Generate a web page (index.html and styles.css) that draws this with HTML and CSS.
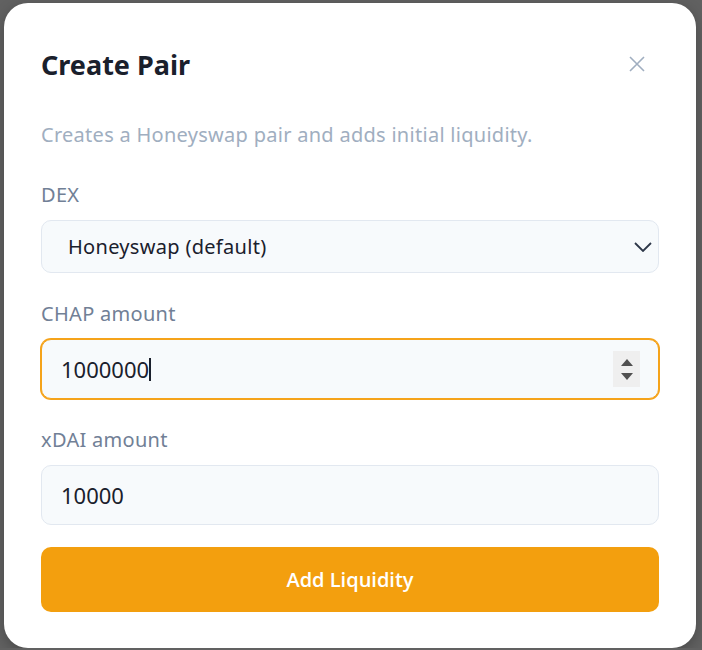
FILE: index.html
```html
<!DOCTYPE html>
<html>

<head>
    <meta charset="utf-8">
    <title>Create Pair</title>
    <link rel="stylesheet" href="styles.css">
</head>

<body>
    <div class="modal">
        <div class="modal_header">
            <h2 class="title">Create Pair</h2>
            <button class="close" aria-label="Close">
                <svg width="16" height="16" viewBox="0 0 16 16">
                    <path d="M1 1L15 15M15 1L1 15" stroke="#a0aec0" stroke-width="1.6" fill="none" />
                </svg>
            </button>
        </div>

        <p class="subtitle">Creates a Honeyswap pair and adds initial liquidity.</p>

        <label class="label">DEX</label>
        <div class="select">
            <span>Honeyswap (default)</span>
            <svg class="chevron" width="18" height="10" viewBox="0 0 18 10">
                <path d="M1 1L9 9L17 1" stroke="#2d3748" stroke-width="1.8" fill="none" />
            </svg>
        </div>

        <label class="label">CHAP amount</label>
        <div class="field focused">
            <span>1000000</span><span class="caret"></span>
            <div class="spinner">
                <span class="arrow up"></span>
                <span class="arrow down"></span>
            </div>
        </div>

        <label class="label">xDAI amount</label>
        <div class="field">
            <span>10000</span>
        </div>

        <button class="submit">Add Liquidity</button>
    </div>
</body>

</html>
```

FILE: styles.css
```css
body {
    margin: 0;
    background: #616161;
    font-family: "Noto Sans", Arial, sans-serif;
    color: #1a202c
}

.modal {
    box-sizing: border-box;
    width: 692px;
    height: 645px;
    margin: 3px 0 0 4px;
    padding: 47px 37px 0 37px;
    background: #fff;
    border-radius: 24px;
    box-shadow: 0 4px 14px rgba(0, 0, 0, 0.25);
    display: flex;
    flex-direction: column
}

.modal_header {
    display: flex;
    justify-content: space-between;
    align-items: center;
    height: 30px
}

.title {
    margin: 0;
    font-size: 27px;
    line-height: 30px;
    font-weight: 700;
    color: #1a202c
}

.close {
    border: none;
    background: none;
    padding: 0;
    width: 16px;
    height: 16px;
    margin-right: 14px;
    margin-top: -2px
}

.close svg {
    display: block
}

.subtitle {
    margin: 40px 0 0 0;
    font-size: 20px;
    line-height: 30px;
    letter-spacing: 0.28px;
    color: #a0aec0
}

.label {
    margin-top: 26px;
    margin-bottom: 10px;
    font-size: 20px;
    line-height: 30px;
    letter-spacing: 0.3px;
    color: #718096
}

.subtitle + .label {
    margin-top: 30px
}

.select {
    box-sizing: border-box;
    height: 53px;
    padding: 0 6px 0 26px;
    display: flex;
    align-items: center;
    justify-content: space-between;
    background: #f7fafc;
    border: 1px solid #e2e8f0;
    border-radius: 10px;
    font-size: 20px;
    letter-spacing: 0.3px
}

.chevron {
    display: block
}

.field {
    box-sizing: border-box;
    height: 60px;
    padding: 0 18px 0 19px;
    display: flex;
    align-items: center;
    background: #f7fafc;
    border: 1px solid #e2e8f0;
    border-radius: 10px;
    font-size: 22px
}

.focused {
    border-color: #f5a31a;
    box-shadow: 0 0 0 1px #f5a31a
}

.caret {
    width: 2px;
    height: 23px;
    background: #1a202c
}

.spinner {
    margin-left: auto;
    width: 27px;
    height: 36px;
    background: #efefef;
    display: flex;
    flex-direction: column;
    align-items: center;
    justify-content: center;
    gap: 7px
}

.arrow {
    width: 0;
    height: 0;
    border-left: 6px solid transparent;
    border-right: 6px solid transparent
}

.up {
    border-bottom: 7px solid #505050
}

.down {
    border-top: 7px solid #505050
}

.submit {
    margin-top: 22px;
    height: 65px;
    border: none;
    border-radius: 10px;
    background: #f39f0e;
    color: #fff;
    font-family: "Open Sans", Arial, sans-serif;
    font-size: 20px;
    font-weight: 600
}
```
